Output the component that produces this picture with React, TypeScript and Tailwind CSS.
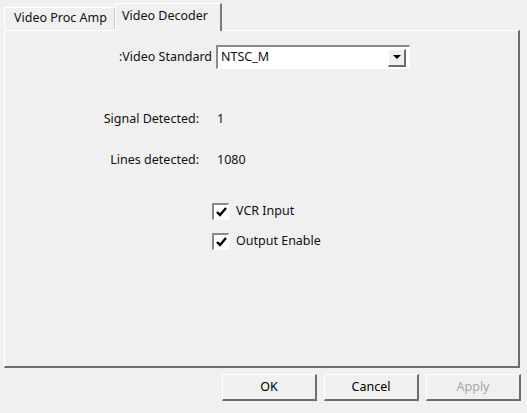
import React, { useState } from 'react';

// raised / sunken win-classic edges
const raised =
  'border-t border-l border-t-white border-l-white border-r-2 border-b-2 border-r-[#6d6d6d] border-b-[#6d6d6d]';
const sunken =
  'border-t-2 border-l-2 border-t-[#8a8a8a] border-l-[#8a8a8a] border-r border-b border-r-white border-b-white';

function CheckRow({ label, checked, onToggle }: { label: string; checked: boolean; onToggle: () => void }) {
  return (
    <div className="flex items-center h-[17px] cursor-default" onClick={onToggle}>
      <div className={`w-[17px] h-[17px] bg-white flex items-center justify-center ${sunken}`}>
        {checked && (
          <svg width="11" height="10" viewBox="0 0 11 10">
            <path d="M1 5 L4 8 L10 1" stroke="#000" strokeWidth="2.4" fill="none" />
          </svg>
        )}
      </div>
      <span className="ml-[7px]">{label}</span>
    </div>
  );
}

function Button({ label, disabled }: { label: string; disabled?: boolean }) {
  return (
    <button
      className={`w-[95px] h-[27px] bg-[#f0f0f0] ${raised} ${disabled ? 'text-[#a8a8a8]' : 'text-black'}`}
    >
      {label}
    </button>
  );
}

export default function App() {
  const [vcr, setVcr] = useState(true);
  const [output, setOutput] = useState(true);

  return (
    <div className="w-[527px] h-[413px] bg-[#f0f0f0] font-['Noto_Sans',sans-serif] text-[12.5px] text-[#111] overflow-hidden">
      <div className="pl-[4px] pt-[3px]">
        {/* tabs */}
        <div className="flex items-end h-[27px]">
          <div className="w-[111px] h-[22px] mb-[1px] flex items-center pl-[9px] border-t border-l border-t-white border-l-white border-r border-r-[#c8c8c8]">
            Video Proc Amp
          </div>
          <div className="w-[107px] h-[28px] -mb-[1px] flex items-start pt-[3px] pl-[6px] bg-[#f0f0f0] border-t border-l border-t-white border-l-white border-r-2 border-r-[#7a7a7a] relative z-10">
            Video Decoder
          </div>
        </div>

        {/* panel */}
        <div className={`w-[516px] h-[338px] ${raised}`}>
          <div className="flex items-center mt-[14px]">
            <div className="w-[207px] text-right">:Video Standard</div>
            <div className={`ml-[4px] w-[194px] h-[24px] bg-white flex items-center ${sunken}`}>
              <span className="flex-1 pl-[3px]">NTSC_M</span>
              <div className={`w-[18px] h-[18px] mr-[3px] bg-[#f0f0f0] flex items-center justify-center ${raised}`}>
                <svg width="8" height="4" viewBox="0 0 8 4">
                  <path d="M0 0 H8 L4 4 Z" fill="#000" />
                </svg>
              </div>
            </div>
          </div>

          <div className="flex items-center mt-[41px]">
            <div className="w-[194px] text-right">Signal Detected:</div>
            <div className="ml-[18px]">1</div>
          </div>

          <div className="flex items-center mt-[22px]">
            <div className="w-[194px] text-right">Lines detected:</div>
            <div className="ml-[18px]">1080</div>
          </div>

          <div className="pl-[207px] mt-[33px] flex flex-col gap-[13px]">
            <CheckRow label="VCR Input" checked={vcr} onToggle={() => setVcr(!vcr)} />
            <CheckRow label="Output Enable" checked={output} onToggle={() => setOutput(!output)} />
          </div>
        </div>

        {/* dialog buttons */}
        <div className="flex justify-end gap-[7px] mt-[6px] w-[517px]">
          <Button label="OK" />
          <Button label="Cancel" />
          <Button label="Apply" disabled />
        </div>
      </div>
    </div>
  );
}
